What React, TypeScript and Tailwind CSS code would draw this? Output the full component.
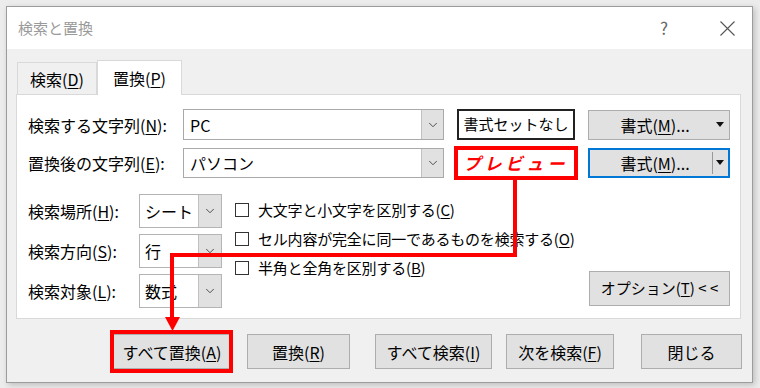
import { ChevronDown } from "lucide-react";

function Mn({ k }: { k: string }) {
  return (
    <>
      (<span className="underline underline-offset-2">{k}</span>)
    </>
  );
}

function DropSeg({ w = "w-[23px]" }: { w?: string }) {
  return (
    <div className={`${w} h-full bg-[#e1e1e1] border-l border-[#c0c0c0] flex items-center justify-center`}>
      <ChevronDown size={14} strokeWidth={1.6} className="text-[#444]" />
    </div>
  );
}

function Combo({ value }: { value: string }) {
  return (
    <div className="w-[83px] h-[34px] border border-[#b4b4b4] bg-white flex">
      <div className="flex-1 flex items-center pl-[5px] text-[16px]">{value}</div>
      <DropSeg />
    </div>
  );
}

function Check({ children }: { children: React.ReactNode }) {
  return (
    <div className="h-[29px] flex items-center gap-[9px]">
      <div className="w-[14px] h-[14px] border border-[#333] bg-white" />
      <span className="text-[15px] leading-none tracking-[-0.2px]">{children}</span>
    </div>
  );
}

function FmtButton({ active = false }: { active?: boolean }) {
  return (
    <div
      className={`w-[142px] h-[30px] bg-[#e1e1e1] flex items-center ${
        active ? "border-2 border-[#0078d7]" : "border border-[#adadad]"
      }`}
    >
      <div className="flex-1 text-center text-[16px] pl-[8px]">
        書式<Mn k="M" />...
      </div>
      <div className={`w-[14px] h-[22px] flex items-center justify-center mr-[2px] ${active ? "border-l border-[#999]" : ""}`}>
        <svg width="8" height="5" viewBox="0 0 8 5">
          <path d="M0 0 H8 L4 5 Z" fill="#111" />
        </svg>
      </div>
    </div>
  );
}

function Btn({ children, w, ml }: { children: React.ReactNode; w: string; ml: string }) {
  return (
    <div className={`${w} ${ml} h-[35px] bg-[#e1e1e1] border border-[#adadad] flex items-center justify-center text-[16px]`}>
      {children}
    </div>
  );
}

export default function App() {
  return (
    <div className="relative w-[760px] h-[388px] bg-[#ececec] pt-[6px] pl-[6px] text-black font-['Noto_Sans_CJK_JP','Noto_Sans',sans-serif] overflow-hidden">
      <div className="w-[747px] h-[377px] border border-[#9c9c9c] bg-[#f0f0f0] shadow-[2px_2px_6px_rgba(0,0,0,0.2)] flex flex-col">
        {/* title bar */}
        <div className="h-[42px] bg-white flex items-center pl-[11px] pr-[17px]">
          <span className="text-[15px] text-[#9a9a9a]">検索と置換</span>
          <span className="ml-auto text-[17px] text-[#666] mr-[52px]">?</span>
          <svg width="15" height="15" viewBox="0 0 15 15">
            <path d="M0.5 0.5 L14.5 14.5 M14.5 0.5 L0.5 14.5" stroke="#555" strokeWidth="1.1" />
          </svg>
        </div>

        {/* tabs */}
        <div className="h-[45px] flex items-end pl-[10px]">
          <div className="w-[80px] h-[32px] border border-b-0 border-[#d9d9d9] bg-[#f0f0f0] flex items-center justify-center text-[16px]">
            検索<Mn k="D" />
          </div>
          <div className="w-[85px] h-[35px] border border-b-0 border-[#d9d9d9] bg-white flex items-center justify-center text-[16px] -mb-[1px] relative z-10">
            置換<Mn k="P" />
          </div>
        </div>

        {/* panel */}
        <div className="ml-[9px] w-[725px] h-[225px] bg-white border border-[#d9d9d9] pt-[14px] pl-[11px] pr-[10px] flex flex-col">
          <div className="flex items-center h-[31px]">
            <div className="w-[155px] text-[16px]">
              検索する文字列<Mn k="N" />:
            </div>
            <div className="w-[261px] h-[31px] border border-[#a9a9a9] flex">
              <div className="flex-1 flex items-center pl-[6px] text-[16px]">PC</div>
              <DropSeg w="w-[22px]" />
            </div>
            <div className="ml-[13px] w-[118px] h-[31px] border-2 border-[#222] flex items-center justify-center text-[15px]">
              書式セットなし
            </div>
            <div className="ml-[13px]">
              <FmtButton />
            </div>
          </div>

          <div className="flex items-center h-[31px] mt-[7px]">
            <div className="w-[155px] text-[16px]">
              置換後の文字列<Mn k="E" />:
            </div>
            <div className="w-[261px] h-[30px] border border-[#a9a9a9] flex">
              <div className="flex-1 flex items-center pl-[6px] text-[16px]">パソコン</div>
              <DropSeg w="w-[22px]" />
            </div>
            <div className="ml-[10px] w-[124px] h-[34px] border-[4px] border-[#f00] bg-white flex items-center justify-center text-[17px] font-bold italic text-[#f00] tracking-[4px]">
              プレビュー
            </div>
            <div className="ml-[10px]">
              <FmtButton active />
            </div>
          </div>

          <div className="flex mt-[16px] flex-1">
            <div className="flex flex-col gap-[6px] w-[194px]">
              {[
                ["検索場所", "H", "シート"],
                ["検索方向", "S", "行"],
                ["検索対象", "L", "数式"],
              ].map(([label, k, v]) => (
                <div key={k} className="flex items-center">
                  <div className="w-[111px] text-[16px]">
                    {label}
                    <Mn k={k} />:
                  </div>
                  <Combo value={v} />
                </div>
              ))}
            </div>
            <div className="ml-[13px] pt-[1px] flex flex-col">
              <Check>
                大文字と小文字を区別する<Mn k="C" />
              </Check>
              <Check>
                セル内容が完全に同一であるものを検索する<Mn k="O" />
              </Check>
              <Check>
                半角と全角を区別する<Mn k="B" />
              </Check>
            </div>
            <div className="ml-auto self-end mb-[12px] w-[141px] h-[35px] bg-[#e1e1e1] border border-[#adadad] flex items-center justify-center text-[15px]">
              オプション<Mn k="T" />&nbsp;&lt; &lt;
            </div>
          </div>
        </div>

        {/* bottom buttons */}
        <div className="flex mt-[15px]">
          <Btn w="w-[118px]" ml="ml-[106px]">
            すべて置換<Mn k="A" />
          </Btn>
          <Btn w="w-[103px]" ml="ml-[16px]">
            置換<Mn k="R" />
          </Btn>
          <Btn w="w-[117px]" ml="ml-[25px]">
            すべて検索<Mn k="I" />
          </Btn>
          <Btn w="w-[108px]" ml="ml-[14px]">
            次を検索<Mn k="F" />
          </Btn>
          <Btn w="w-[101px]" ml="ml-[27px]">
            閉じる
          </Btn>
        </div>
      </div>

      {/* red annotation overlay */}
      <div className="absolute left-[513px] top-[180px] w-[4px] h-[77px] bg-[#f00]" />
      <div className="absolute left-[170px] top-[253px] w-[347px] h-[4px] bg-[#f00]" />
      <div className="absolute left-[170px] top-[253px] w-[4px] h-[66px] bg-[#f00]" />
      <svg className="absolute left-[165px] top-[317px]" width="15" height="14" viewBox="0 0 15 14">
        <path d="M0 0 H15 L7.5 14 Z" fill="#f00" />
      </svg>
      <div className="absolute left-[110px] top-[330px] w-[123px] h-[43px] border-[4px] border-[#f00]" />
    </div>
  );
}
